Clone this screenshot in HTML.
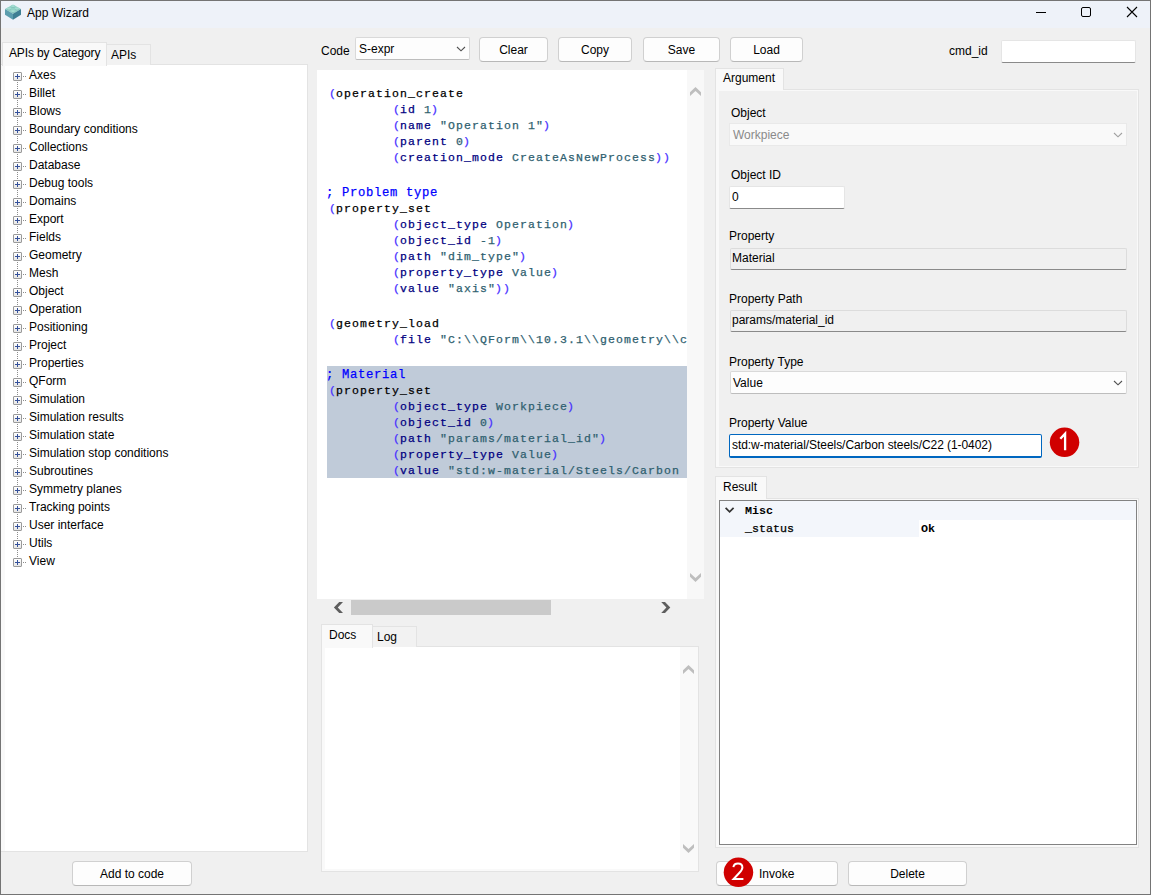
<!DOCTYPE html>
<html><head><meta charset="utf-8">
<style>
html,body{margin:0;padding:0;}
body{width:1151px;height:895px;overflow:hidden;background:#f0f0f0;position:relative;font-family:"Liberation Sans",sans-serif;font-size:12px;color:#000;}
.a{position:absolute;}
.t{position:absolute;white-space:nowrap;line-height:14px;z-index:3;}
.btn{position:absolute;box-sizing:border-box;background:#fdfdfd;border:1px solid #d0d0d0;border-bottom-color:#b8b8b8;border-radius:4px;}
.btn span{position:absolute;left:0;right:0;text-align:center;white-space:nowrap;}
.tab{position:absolute;z-index:2;box-sizing:border-box;border:1px solid #e3e3e3;border-bottom:none;}
.code{position:absolute;font-family:"Liberation Mono",monospace;font-size:11.5px;letter-spacing:1.1px;line-height:16px;white-space:pre;-webkit-text-stroke:0.25px currentColor;}
.p{color:#4830ff}
.o{position:relative;left:1px}
.cl{position:relative;left:-1px}
.k{color:#000}
.n{color:#000080}
.v{color:#2f5f6f}
.c{color:#0000ff}
.tree .i{position:absolute;left:0;height:18px;}
</style></head><body>
<!-- window border -->
<div class="a" style="left:0;top:0;width:1151px;height:895px;box-sizing:border-box;border:1px solid #747474;"></div>
<!-- title bar -->
<div class="a" style="left:1px;top:1px;width:1149px;height:27px;background:#eef2f9;"></div>
<!-- title icon -->
<svg class="a" style="left:0;top:0" width="26" height="26" viewBox="0 0 26 26">
  <polygon points="5,9 13,4.6 21,9 13,13.8" fill="#92d2c6"/>
  <polygon points="5,9 13,13.8 13,19.8 5,14.8" fill="#5b9dae"/>
  <polygon points="21,9 13,13.8 13,19.8 21,14.8" fill="#3e7f93"/>
  <ellipse cx="13" cy="6.6" rx="2.2" ry="1.3" fill="#7fc1b8"/>
  <ellipse cx="13" cy="6.1" rx="2.2" ry="1.1" fill="#a4dcd2"/>
  <ellipse cx="9" cy="9.1" rx="2.2" ry="1.3" fill="#7fc1b8"/>
  <ellipse cx="9" cy="8.6" rx="2.2" ry="1.1" fill="#a4dcd2"/>
  <ellipse cx="17" cy="9.1" rx="2.2" ry="1.3" fill="#7fc1b8"/>
  <ellipse cx="17" cy="8.6" rx="2.2" ry="1.1" fill="#a4dcd2"/>
  <ellipse cx="13" cy="11.6" rx="2.2" ry="1.3" fill="#7fc1b8"/>
  <ellipse cx="13" cy="11.1" rx="2.2" ry="1.1" fill="#a4dcd2"/>
</svg>
<div class="t" style="left:27px;top:6px;">App Wizard</div>
<!-- window controls -->
<div class="a" style="left:1036px;top:12px;width:10px;height:1px;background:#000;"></div>
<div class="a" style="left:1081px;top:7px;width:8px;height:8px;border:1px solid #000;border-radius:2px;"></div>
<svg class="a" style="left:1126px;top:6px" width="12" height="12" viewBox="0 0 12 12"><path d="M1,1 L11,11 M11,1 L1,11" stroke="#000" stroke-width="1.1"/></svg>

<!-- left tabs -->
<div class="tab" style="left:2px;top:42px;width:105px;height:24px;background:#f9f9f9;"></div>
<div class="t" style="left:9px;top:46px;letter-spacing:-0.13px;">APIs by Category</div>
<div class="tab" style="left:106px;top:44px;width:45px;height:21px;background:#f2f2f2;border-left:none;z-index:1;"></div>
<div class="t" style="left:111px;top:48px;">APIs</div>
<!-- tree pane -->
<div class="a" style="left:1px;top:64px;width:307px;height:788px;box-sizing:border-box;background:#f9f9f9;border:1px solid #e3e3e3;border-left:none;"></div>
<div class="a" style="left:5px;top:65px;width:302px;height:786px;background:#fff;"></div>

<div class="a" style="left:17px;top:82px;width:1px;height:476px;background:repeating-linear-gradient(to bottom,#8c8c8c 0 1px,transparent 1px 2px);"></div>
<div class="a" style="left:13px;top:72px;width:7px;height:7px;border:1px solid #9a9a9a;border-radius:1px;background:linear-gradient(#fff,#e6e6e6);"></div>
<div class="a" style="left:15px;top:76px;width:5px;height:1px;background:#34509a;"></div>
<div class="a" style="left:17px;top:74px;width:1px;height:5px;background:#34509a;"></div>
<div class="a" style="left:23px;top:76px;width:4px;height:1px;background:repeating-linear-gradient(to right,#8c8c8c 0 1px,transparent 1px 2px);"></div>
<div class="t" style="left:29px;top:68px;">Axes</div>
<div class="a" style="left:13px;top:90px;width:7px;height:7px;border:1px solid #9a9a9a;border-radius:1px;background:linear-gradient(#fff,#e6e6e6);"></div>
<div class="a" style="left:15px;top:94px;width:5px;height:1px;background:#34509a;"></div>
<div class="a" style="left:17px;top:92px;width:1px;height:5px;background:#34509a;"></div>
<div class="a" style="left:23px;top:94px;width:4px;height:1px;background:repeating-linear-gradient(to right,#8c8c8c 0 1px,transparent 1px 2px);"></div>
<div class="t" style="left:29px;top:86px;">Billet</div>
<div class="a" style="left:13px;top:108px;width:7px;height:7px;border:1px solid #9a9a9a;border-radius:1px;background:linear-gradient(#fff,#e6e6e6);"></div>
<div class="a" style="left:15px;top:112px;width:5px;height:1px;background:#34509a;"></div>
<div class="a" style="left:17px;top:110px;width:1px;height:5px;background:#34509a;"></div>
<div class="a" style="left:23px;top:112px;width:4px;height:1px;background:repeating-linear-gradient(to right,#8c8c8c 0 1px,transparent 1px 2px);"></div>
<div class="t" style="left:29px;top:104px;">Blows</div>
<div class="a" style="left:13px;top:126px;width:7px;height:7px;border:1px solid #9a9a9a;border-radius:1px;background:linear-gradient(#fff,#e6e6e6);"></div>
<div class="a" style="left:15px;top:130px;width:5px;height:1px;background:#34509a;"></div>
<div class="a" style="left:17px;top:128px;width:1px;height:5px;background:#34509a;"></div>
<div class="a" style="left:23px;top:130px;width:4px;height:1px;background:repeating-linear-gradient(to right,#8c8c8c 0 1px,transparent 1px 2px);"></div>
<div class="t" style="left:29px;top:122px;">Boundary conditions</div>
<div class="a" style="left:13px;top:144px;width:7px;height:7px;border:1px solid #9a9a9a;border-radius:1px;background:linear-gradient(#fff,#e6e6e6);"></div>
<div class="a" style="left:15px;top:148px;width:5px;height:1px;background:#34509a;"></div>
<div class="a" style="left:17px;top:146px;width:1px;height:5px;background:#34509a;"></div>
<div class="a" style="left:23px;top:148px;width:4px;height:1px;background:repeating-linear-gradient(to right,#8c8c8c 0 1px,transparent 1px 2px);"></div>
<div class="t" style="left:29px;top:140px;">Collections</div>
<div class="a" style="left:13px;top:162px;width:7px;height:7px;border:1px solid #9a9a9a;border-radius:1px;background:linear-gradient(#fff,#e6e6e6);"></div>
<div class="a" style="left:15px;top:166px;width:5px;height:1px;background:#34509a;"></div>
<div class="a" style="left:17px;top:164px;width:1px;height:5px;background:#34509a;"></div>
<div class="a" style="left:23px;top:166px;width:4px;height:1px;background:repeating-linear-gradient(to right,#8c8c8c 0 1px,transparent 1px 2px);"></div>
<div class="t" style="left:29px;top:158px;">Database</div>
<div class="a" style="left:13px;top:180px;width:7px;height:7px;border:1px solid #9a9a9a;border-radius:1px;background:linear-gradient(#fff,#e6e6e6);"></div>
<div class="a" style="left:15px;top:184px;width:5px;height:1px;background:#34509a;"></div>
<div class="a" style="left:17px;top:182px;width:1px;height:5px;background:#34509a;"></div>
<div class="a" style="left:23px;top:184px;width:4px;height:1px;background:repeating-linear-gradient(to right,#8c8c8c 0 1px,transparent 1px 2px);"></div>
<div class="t" style="left:29px;top:176px;">Debug tools</div>
<div class="a" style="left:13px;top:198px;width:7px;height:7px;border:1px solid #9a9a9a;border-radius:1px;background:linear-gradient(#fff,#e6e6e6);"></div>
<div class="a" style="left:15px;top:202px;width:5px;height:1px;background:#34509a;"></div>
<div class="a" style="left:17px;top:200px;width:1px;height:5px;background:#34509a;"></div>
<div class="a" style="left:23px;top:202px;width:4px;height:1px;background:repeating-linear-gradient(to right,#8c8c8c 0 1px,transparent 1px 2px);"></div>
<div class="t" style="left:29px;top:194px;">Domains</div>
<div class="a" style="left:13px;top:216px;width:7px;height:7px;border:1px solid #9a9a9a;border-radius:1px;background:linear-gradient(#fff,#e6e6e6);"></div>
<div class="a" style="left:15px;top:220px;width:5px;height:1px;background:#34509a;"></div>
<div class="a" style="left:17px;top:218px;width:1px;height:5px;background:#34509a;"></div>
<div class="a" style="left:23px;top:220px;width:4px;height:1px;background:repeating-linear-gradient(to right,#8c8c8c 0 1px,transparent 1px 2px);"></div>
<div class="t" style="left:29px;top:212px;">Export</div>
<div class="a" style="left:13px;top:234px;width:7px;height:7px;border:1px solid #9a9a9a;border-radius:1px;background:linear-gradient(#fff,#e6e6e6);"></div>
<div class="a" style="left:15px;top:238px;width:5px;height:1px;background:#34509a;"></div>
<div class="a" style="left:17px;top:236px;width:1px;height:5px;background:#34509a;"></div>
<div class="a" style="left:23px;top:238px;width:4px;height:1px;background:repeating-linear-gradient(to right,#8c8c8c 0 1px,transparent 1px 2px);"></div>
<div class="t" style="left:29px;top:230px;">Fields</div>
<div class="a" style="left:13px;top:252px;width:7px;height:7px;border:1px solid #9a9a9a;border-radius:1px;background:linear-gradient(#fff,#e6e6e6);"></div>
<div class="a" style="left:15px;top:256px;width:5px;height:1px;background:#34509a;"></div>
<div class="a" style="left:17px;top:254px;width:1px;height:5px;background:#34509a;"></div>
<div class="a" style="left:23px;top:256px;width:4px;height:1px;background:repeating-linear-gradient(to right,#8c8c8c 0 1px,transparent 1px 2px);"></div>
<div class="t" style="left:29px;top:248px;">Geometry</div>
<div class="a" style="left:13px;top:270px;width:7px;height:7px;border:1px solid #9a9a9a;border-radius:1px;background:linear-gradient(#fff,#e6e6e6);"></div>
<div class="a" style="left:15px;top:274px;width:5px;height:1px;background:#34509a;"></div>
<div class="a" style="left:17px;top:272px;width:1px;height:5px;background:#34509a;"></div>
<div class="a" style="left:23px;top:274px;width:4px;height:1px;background:repeating-linear-gradient(to right,#8c8c8c 0 1px,transparent 1px 2px);"></div>
<div class="t" style="left:29px;top:266px;">Mesh</div>
<div class="a" style="left:13px;top:288px;width:7px;height:7px;border:1px solid #9a9a9a;border-radius:1px;background:linear-gradient(#fff,#e6e6e6);"></div>
<div class="a" style="left:15px;top:292px;width:5px;height:1px;background:#34509a;"></div>
<div class="a" style="left:17px;top:290px;width:1px;height:5px;background:#34509a;"></div>
<div class="a" style="left:23px;top:292px;width:4px;height:1px;background:repeating-linear-gradient(to right,#8c8c8c 0 1px,transparent 1px 2px);"></div>
<div class="t" style="left:29px;top:284px;">Object</div>
<div class="a" style="left:13px;top:306px;width:7px;height:7px;border:1px solid #9a9a9a;border-radius:1px;background:linear-gradient(#fff,#e6e6e6);"></div>
<div class="a" style="left:15px;top:310px;width:5px;height:1px;background:#34509a;"></div>
<div class="a" style="left:17px;top:308px;width:1px;height:5px;background:#34509a;"></div>
<div class="a" style="left:23px;top:310px;width:4px;height:1px;background:repeating-linear-gradient(to right,#8c8c8c 0 1px,transparent 1px 2px);"></div>
<div class="t" style="left:29px;top:302px;">Operation</div>
<div class="a" style="left:13px;top:324px;width:7px;height:7px;border:1px solid #9a9a9a;border-radius:1px;background:linear-gradient(#fff,#e6e6e6);"></div>
<div class="a" style="left:15px;top:328px;width:5px;height:1px;background:#34509a;"></div>
<div class="a" style="left:17px;top:326px;width:1px;height:5px;background:#34509a;"></div>
<div class="a" style="left:23px;top:328px;width:4px;height:1px;background:repeating-linear-gradient(to right,#8c8c8c 0 1px,transparent 1px 2px);"></div>
<div class="t" style="left:29px;top:320px;">Positioning</div>
<div class="a" style="left:13px;top:342px;width:7px;height:7px;border:1px solid #9a9a9a;border-radius:1px;background:linear-gradient(#fff,#e6e6e6);"></div>
<div class="a" style="left:15px;top:346px;width:5px;height:1px;background:#34509a;"></div>
<div class="a" style="left:17px;top:344px;width:1px;height:5px;background:#34509a;"></div>
<div class="a" style="left:23px;top:346px;width:4px;height:1px;background:repeating-linear-gradient(to right,#8c8c8c 0 1px,transparent 1px 2px);"></div>
<div class="t" style="left:29px;top:338px;">Project</div>
<div class="a" style="left:13px;top:360px;width:7px;height:7px;border:1px solid #9a9a9a;border-radius:1px;background:linear-gradient(#fff,#e6e6e6);"></div>
<div class="a" style="left:15px;top:364px;width:5px;height:1px;background:#34509a;"></div>
<div class="a" style="left:17px;top:362px;width:1px;height:5px;background:#34509a;"></div>
<div class="a" style="left:23px;top:364px;width:4px;height:1px;background:repeating-linear-gradient(to right,#8c8c8c 0 1px,transparent 1px 2px);"></div>
<div class="t" style="left:29px;top:356px;">Properties</div>
<div class="a" style="left:13px;top:378px;width:7px;height:7px;border:1px solid #9a9a9a;border-radius:1px;background:linear-gradient(#fff,#e6e6e6);"></div>
<div class="a" style="left:15px;top:382px;width:5px;height:1px;background:#34509a;"></div>
<div class="a" style="left:17px;top:380px;width:1px;height:5px;background:#34509a;"></div>
<div class="a" style="left:23px;top:382px;width:4px;height:1px;background:repeating-linear-gradient(to right,#8c8c8c 0 1px,transparent 1px 2px);"></div>
<div class="t" style="left:29px;top:374px;">QForm</div>
<div class="a" style="left:13px;top:396px;width:7px;height:7px;border:1px solid #9a9a9a;border-radius:1px;background:linear-gradient(#fff,#e6e6e6);"></div>
<div class="a" style="left:15px;top:400px;width:5px;height:1px;background:#34509a;"></div>
<div class="a" style="left:17px;top:398px;width:1px;height:5px;background:#34509a;"></div>
<div class="a" style="left:23px;top:400px;width:4px;height:1px;background:repeating-linear-gradient(to right,#8c8c8c 0 1px,transparent 1px 2px);"></div>
<div class="t" style="left:29px;top:392px;">Simulation</div>
<div class="a" style="left:13px;top:414px;width:7px;height:7px;border:1px solid #9a9a9a;border-radius:1px;background:linear-gradient(#fff,#e6e6e6);"></div>
<div class="a" style="left:15px;top:418px;width:5px;height:1px;background:#34509a;"></div>
<div class="a" style="left:17px;top:416px;width:1px;height:5px;background:#34509a;"></div>
<div class="a" style="left:23px;top:418px;width:4px;height:1px;background:repeating-linear-gradient(to right,#8c8c8c 0 1px,transparent 1px 2px);"></div>
<div class="t" style="left:29px;top:410px;">Simulation results</div>
<div class="a" style="left:13px;top:432px;width:7px;height:7px;border:1px solid #9a9a9a;border-radius:1px;background:linear-gradient(#fff,#e6e6e6);"></div>
<div class="a" style="left:15px;top:436px;width:5px;height:1px;background:#34509a;"></div>
<div class="a" style="left:17px;top:434px;width:1px;height:5px;background:#34509a;"></div>
<div class="a" style="left:23px;top:436px;width:4px;height:1px;background:repeating-linear-gradient(to right,#8c8c8c 0 1px,transparent 1px 2px);"></div>
<div class="t" style="left:29px;top:428px;">Simulation state</div>
<div class="a" style="left:13px;top:450px;width:7px;height:7px;border:1px solid #9a9a9a;border-radius:1px;background:linear-gradient(#fff,#e6e6e6);"></div>
<div class="a" style="left:15px;top:454px;width:5px;height:1px;background:#34509a;"></div>
<div class="a" style="left:17px;top:452px;width:1px;height:5px;background:#34509a;"></div>
<div class="a" style="left:23px;top:454px;width:4px;height:1px;background:repeating-linear-gradient(to right,#8c8c8c 0 1px,transparent 1px 2px);"></div>
<div class="t" style="left:29px;top:446px;">Simulation stop conditions</div>
<div class="a" style="left:13px;top:468px;width:7px;height:7px;border:1px solid #9a9a9a;border-radius:1px;background:linear-gradient(#fff,#e6e6e6);"></div>
<div class="a" style="left:15px;top:472px;width:5px;height:1px;background:#34509a;"></div>
<div class="a" style="left:17px;top:470px;width:1px;height:5px;background:#34509a;"></div>
<div class="a" style="left:23px;top:472px;width:4px;height:1px;background:repeating-linear-gradient(to right,#8c8c8c 0 1px,transparent 1px 2px);"></div>
<div class="t" style="left:29px;top:464px;">Subroutines</div>
<div class="a" style="left:13px;top:486px;width:7px;height:7px;border:1px solid #9a9a9a;border-radius:1px;background:linear-gradient(#fff,#e6e6e6);"></div>
<div class="a" style="left:15px;top:490px;width:5px;height:1px;background:#34509a;"></div>
<div class="a" style="left:17px;top:488px;width:1px;height:5px;background:#34509a;"></div>
<div class="a" style="left:23px;top:490px;width:4px;height:1px;background:repeating-linear-gradient(to right,#8c8c8c 0 1px,transparent 1px 2px);"></div>
<div class="t" style="left:29px;top:482px;">Symmetry planes</div>
<div class="a" style="left:13px;top:504px;width:7px;height:7px;border:1px solid #9a9a9a;border-radius:1px;background:linear-gradient(#fff,#e6e6e6);"></div>
<div class="a" style="left:15px;top:508px;width:5px;height:1px;background:#34509a;"></div>
<div class="a" style="left:17px;top:506px;width:1px;height:5px;background:#34509a;"></div>
<div class="a" style="left:23px;top:508px;width:4px;height:1px;background:repeating-linear-gradient(to right,#8c8c8c 0 1px,transparent 1px 2px);"></div>
<div class="t" style="left:29px;top:500px;">Tracking points</div>
<div class="a" style="left:13px;top:522px;width:7px;height:7px;border:1px solid #9a9a9a;border-radius:1px;background:linear-gradient(#fff,#e6e6e6);"></div>
<div class="a" style="left:15px;top:526px;width:5px;height:1px;background:#34509a;"></div>
<div class="a" style="left:17px;top:524px;width:1px;height:5px;background:#34509a;"></div>
<div class="a" style="left:23px;top:526px;width:4px;height:1px;background:repeating-linear-gradient(to right,#8c8c8c 0 1px,transparent 1px 2px);"></div>
<div class="t" style="left:29px;top:518px;">User interface</div>
<div class="a" style="left:13px;top:540px;width:7px;height:7px;border:1px solid #9a9a9a;border-radius:1px;background:linear-gradient(#fff,#e6e6e6);"></div>
<div class="a" style="left:15px;top:544px;width:5px;height:1px;background:#34509a;"></div>
<div class="a" style="left:17px;top:542px;width:1px;height:5px;background:#34509a;"></div>
<div class="a" style="left:23px;top:544px;width:4px;height:1px;background:repeating-linear-gradient(to right,#8c8c8c 0 1px,transparent 1px 2px);"></div>
<div class="t" style="left:29px;top:536px;">Utils</div>
<div class="a" style="left:13px;top:558px;width:7px;height:7px;border:1px solid #9a9a9a;border-radius:1px;background:linear-gradient(#fff,#e6e6e6);"></div>
<div class="a" style="left:15px;top:562px;width:5px;height:1px;background:#34509a;"></div>
<div class="a" style="left:17px;top:560px;width:1px;height:5px;background:#34509a;"></div>
<div class="a" style="left:23px;top:562px;width:4px;height:1px;background:repeating-linear-gradient(to right,#8c8c8c 0 1px,transparent 1px 2px);"></div>
<div class="t" style="left:29px;top:554px;">View</div>
<!-- toolbar -->
<div class="t" style="left:321px;top:44px;">Code</div>
<div class="a" style="left:355px;top:37px;width:115px;height:23px;box-sizing:border-box;background:#fdfdfd;border:1px solid #d9d9d9;border-bottom-color:#bdbdbd;border-radius:2px;"></div>
<div class="t" style="left:359px;top:42px;">S-expr</div>
<svg class="a" style="left:456px;top:46px" width="10" height="6" viewBox="0 0 10 6"><path d="M1,1 L5,4.8 L9,1" stroke="#505050" fill="none" stroke-width="1.1"/></svg>
<div class="btn" style="left:479px;top:37px;width:69px;height:25px;"><span style="top:5px;">Clear</span></div>
<div class="btn" style="left:558px;top:37px;width:74px;height:25px;"><span style="top:5px;">Copy</span></div>
<div class="btn" style="left:643px;top:37px;width:77px;height:25px;"><span style="top:5px;">Save</span></div>
<div class="btn" style="left:730px;top:37px;width:73px;height:25px;"><span style="top:5px;">Load</span></div>
<div class="t" style="left:949px;top:44px;">cmd_id</div>
<div class="a" style="left:1001px;top:40px;width:135px;height:23px;box-sizing:border-box;background:#fff;border:1px solid #e5e5e5;border-bottom:1px solid #8a8a8a;border-radius:2px;"></div>

<!-- code editor -->
<div class="a" style="left:317px;top:70px;width:370px;height:529px;background:#fff;overflow:hidden;">
  <div class="a" style="left:10px;top:296px;width:360px;height:112px;background:#c0cbd9;"></div>
  <div id="codewrap" class="a" style="left:0;top:0;width:370px;height:529px;">
<div class="code" style="left:11px;top:16px;"><span class="p o">(</span><span class="k">operation_create</span></div>
<div class="code" style="left:75px;top:32px;"><span class="p o">(</span><span class="n">id </span><span class="v">1</span><span class="p cl">)</span></div>
<div class="code" style="left:75px;top:48px;"><span class="p o">(</span><span class="n">name </span><span class="v">&quot;Operation 1&quot;</span><span class="p cl">)</span></div>
<div class="code" style="left:75px;top:64px;"><span class="p o">(</span><span class="n">parent </span><span class="v">0</span><span class="p cl">)</span></div>
<div class="code" style="left:75px;top:80px;"><span class="p o">(</span><span class="n">creation_mode </span><span class="v">CreateAsNewProcess</span><span class="p cl">))</span></div>
<div class="code" style="left:9px;top:115px;font-size:12.2px;letter-spacing:0.68px;"><span class="c">; Problem type</span></div>
<div class="code" style="left:11px;top:131px;"><span class="p o">(</span><span class="k">property_set</span></div>
<div class="code" style="left:75px;top:147px;"><span class="p o">(</span><span class="n">object_type </span><span class="v">Operation</span><span class="p cl">)</span></div>
<div class="code" style="left:75px;top:163px;"><span class="p o">(</span><span class="n">object_id </span><span class="v">-1</span><span class="p cl">)</span></div>
<div class="code" style="left:75px;top:179px;"><span class="p o">(</span><span class="n">path </span><span class="v">&quot;dim_type&quot;</span><span class="p cl">)</span></div>
<div class="code" style="left:75px;top:195px;"><span class="p o">(</span><span class="n">property_type </span><span class="v">Value</span><span class="p cl">)</span></div>
<div class="code" style="left:75px;top:211px;"><span class="p o">(</span><span class="n">value </span><span class="v">&quot;axis&quot;</span><span class="p cl">))</span></div>
<div class="code" style="left:11px;top:246px;"><span class="p o">(</span><span class="k">geometry_load</span></div>
<div class="code" style="left:75px;top:262px;"><span class="p o">(</span><span class="n">file </span><span class="v">&quot;C:\\QForm\\10.3.1\\geometry\\crank.stp&quot;</span><span class="p cl">)</span></div>
<div class="code" style="left:9px;top:297px;font-size:12.2px;letter-spacing:0.68px;"><span class="c">; Material</span></div>
<div class="code" style="left:11px;top:313px;"><span class="p o">(</span><span class="k">property_set</span></div>
<div class="code" style="left:75px;top:329px;"><span class="p o">(</span><span class="n">object_type </span><span class="v">Workpiece</span><span class="p cl">)</span></div>
<div class="code" style="left:75px;top:345px;"><span class="p o">(</span><span class="n">object_id </span><span class="v">0</span><span class="p cl">)</span></div>
<div class="code" style="left:75px;top:361px;"><span class="p o">(</span><span class="n">path </span><span class="v">&quot;params/material_id&quot;</span><span class="p cl">)</span></div>
<div class="code" style="left:75px;top:377px;"><span class="p o">(</span><span class="n">property_type </span><span class="v">Value</span><span class="p cl">)</span></div>
<div class="code" style="left:75px;top:393px;"><span class="p o">(</span><span class="n">value </span><span class="v">&quot;std:w-material/Steels/Carbon steels/C22 (1-0402)&quot;</span><span class="p cl">))</span></div>
  </div>
</div>
<div class="a" style="left:687px;top:70px;width:17px;height:529px;background:#f8f8f8;"></div>


<!-- h scroll -->
<div class="a" style="left:351px;top:600px;width:200px;height:15px;background:#cacaca;"></div>



<!-- docs/log tabs -->
<div class="tab" style="left:321px;top:624px;width:52px;height:24px;background:#f9f9f9;"></div>
<div class="t" style="left:329px;top:628px;">Docs</div>
<div class="tab" style="left:372px;top:626px;width:45px;height:21px;background:#f2f2f2;border-left:none;z-index:1;"></div>
<div class="t" style="left:377px;top:630px;">Log</div>
<div class="a" style="left:321px;top:646px;width:378px;height:226px;box-sizing:border-box;background:#f9f9f9;border:1px solid #e3e3e3;"></div>
<div class="a" style="left:325px;top:647px;width:355px;height:222px;background:#fff;"></div>



<!-- add to code -->
<div class="btn" style="left:72px;top:861px;width:120px;height:25px;"><span style="top:5px;">Add to code</span></div>

<!-- argument tab -->
<div class="tab" style="left:715px;top:68px;width:69px;height:22px;background:#f9f9f9;"></div>
<div class="t" style="left:723px;top:71px;">Argument</div>
<div class="a" style="left:715px;top:89px;width:424px;height:379px;box-sizing:border-box;background:#f9f9f9;border:1px solid #e3e3e3;"></div>
<div class="a" style="left:719px;top:91px;width:418px;height:375px;background:#f0f0f0;"></div>

<div class="t" style="left:731px;top:106px;">Object</div>
<div class="a" style="left:729px;top:123px;width:398px;height:23px;box-sizing:border-box;background:#f9f9f9;border:1px solid #e9e9e9;"></div>
<div class="t" style="left:733px;top:128px;color:#8a8a8a;">Workpiece</div>
<svg class="a" style="left:1113px;top:132px" width="10" height="6" viewBox="0 0 10 6"><path d="M1,1 L5,4.8 L9,1" stroke="#a0a0a0" fill="none" stroke-width="1.1"/></svg>

<div class="t" style="left:731px;top:168px;">Object ID</div>
<div class="a" style="left:729px;top:186px;width:116px;height:23px;box-sizing:border-box;background:#fff;border:1px solid #e5e5e5;border-bottom:1px solid #8a8a8a;border-radius:2px;"></div>
<div class="t" style="left:732px;top:190px;">0</div>

<div class="t" style="left:729px;top:229px;">Property</div>
<div class="a" style="left:730px;top:248px;width:397px;height:22px;box-sizing:border-box;background:#f0f0f0;border:1px solid #dcdcdc;border-bottom:1px solid #8a8a8a;border-radius:2px;"></div>
<div class="t" style="left:732px;top:251px;">Material</div>

<div class="t" style="left:729px;top:292px;">Property Path</div>
<div class="a" style="left:730px;top:310px;width:397px;height:22px;box-sizing:border-box;background:#f0f0f0;border:1px solid #dcdcdc;border-bottom:1px solid #8a8a8a;border-radius:2px;"></div>
<div class="t" style="left:732px;top:313px;">params/material_id</div>

<div class="t" style="left:729px;top:355px;">Property Type</div>
<div class="a" style="left:730px;top:371px;width:397px;height:23px;box-sizing:border-box;background:#fdfdfd;border:1px solid #d9d9d9;border-bottom-color:#bdbdbd;border-radius:2px;"></div>
<div class="t" style="left:733px;top:376px;">Value</div>
<svg class="a" style="left:1113px;top:380px" width="10" height="6" viewBox="0 0 10 6"><path d="M1,1 L5,4.8 L9,1" stroke="#505050" fill="none" stroke-width="1.1"/></svg>

<div class="t" style="left:729px;top:416px;">Property Value</div>
<div class="a" style="left:729px;top:434px;width:313px;height:24px;box-sizing:border-box;background:#fff;border:1px solid #0067c0;border-bottom:2px solid #0067c0;border-radius:2px;"></div>
<div class="t" style="left:732px;top:438px;letter-spacing:-0.06px;">std:w-material/Steels/Carbon steels/C22 (1-0402)</div>
<svg class="a" style="left:1040px;top:420px;z-index:4" width="50" height="50" viewBox="1040 420 50 50"><circle cx="1064.55" cy="442.35" r="14.75" fill="#d00000"/><path d="M1060.3,438.8 L1065.1,433.6 L1065.1,450.2" stroke="#fff" stroke-width="2.3" fill="none" stroke-linejoin="miter"/></svg>

<!-- result tab -->
<div class="tab" style="left:715px;top:476px;width:52px;height:23px;background:#f9f9f9;"></div>
<div class="t" style="left:723px;top:480px;">Result</div>
<div class="a" style="left:715px;top:498px;width:424px;height:350px;box-sizing:border-box;background:#f9f9f9;border:1px solid #e3e3e3;"></div>
<div class="a" style="left:719px;top:500px;width:418px;height:345px;box-sizing:border-box;background:#fff;border:1px solid #828282;"></div>
<div class="a" style="left:720px;top:501px;width:416px;height:36px;background:#f3f6fb;"></div>
<div class="a" style="left:919px;top:520px;width:217px;height:17px;background:#fff;"></div>
<svg class="a" style="left:724px;top:506px" width="12" height="8" viewBox="0 0 12 8"><path d="M1.6,1.8 L5.6,5.8 L9.6,1.8" stroke="#333" fill="none" stroke-width="1.7"/></svg>
<div class="t" style="left:745px;top:504px;font-family:'Liberation Mono',monospace;font-weight:bold;font-size:11.7px;">Misc</div>
<div class="t" style="left:745px;top:522px;font-family:'Liberation Mono',monospace;font-size:11.7px;-webkit-text-stroke:0.25px #000;">_status</div>
<div class="t" style="left:921px;top:522px;font-family:'Liberation Mono',monospace;font-weight:bold;font-size:11.7px;">Ok</div>

<!-- bottom buttons -->
<div class="btn" style="left:716px;top:861px;width:122px;height:25px;"><span style="top:5px;left:42px;right:0;text-align:left;">Invoke</span></div>
<svg class="a" style="left:715px;top:850px;z-index:4" width="50" height="45" viewBox="715 850 50 45"><circle cx="738.45" cy="872.35" r="14.75" fill="#d00000"/><path d="M733.4,867.2 C733.8,864.6 735.6,863.6 738,863.6 C740.6,863.6 742.4,865.2 742.4,867.6 C742.4,869.8 741,871.2 739.2,873 L733.6,879 L743.4,879" stroke="#fff" stroke-width="2" fill="none" stroke-linejoin="miter"/></svg>
<div class="btn" style="left:848px;top:861px;width:119px;height:25px;"><span style="top:5px;">Delete</span></div>

<svg class="a" style="left:0;top:0;z-index:5;pointer-events:none" width="1151" height="895" viewBox="0 0 1151 895">
<polygon points="690,92.3 695.5,87 701,92.3 701,96 695.5,91 690,96" fill="#bebebe"/>
<polygon points="690,576.8 695.5,582 701,576.8 701,573 695.5,578 690,573" fill="#bebebe"/>
<polygon points="683,670.3 688.5,665 694,670.3 694,674 688.5,669 683,674" fill="#bebebe"/>
<polygon points="683,847.8 688.5,853 694,847.8 694,844 688.5,849 683,844" fill="#bebebe"/>
<polygon points="333.9,607.5 339.2,602 343,602 337.8,607.5 343,613 339.2,613" fill="#5e5e5e"/>
<polygon points="670.3,607.5 665,602 661.2,602 666.4,607.5 661.2,613 665,613" fill="#5e5e5e"/>
</svg>
</body></html>
